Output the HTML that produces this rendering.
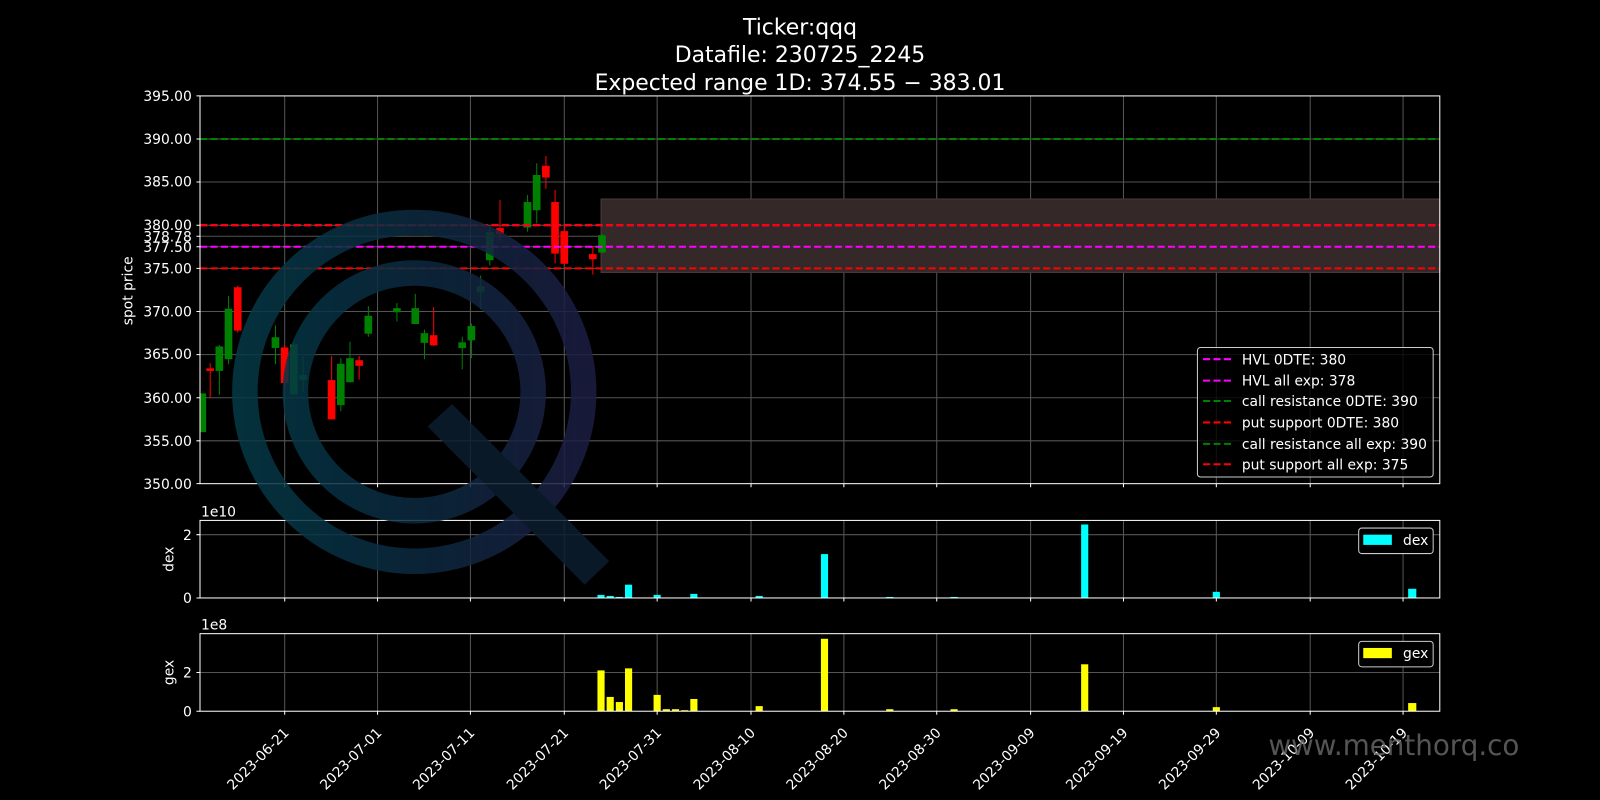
<!DOCTYPE html>
<html><head><meta charset="utf-8"><style>html,body{margin:0;padding:0;background:#000;}svg{display:block}</style></head>
<body>
<svg width="1600" height="800" viewBox="0 0 1568 784" preserveAspectRatio="none" xmlns="http://www.w3.org/2000/svg" font-family="DejaVu Sans, Liberation Sans, sans-serif" fill="#fff">
<defs>
<linearGradient id="wg" x1="228" y1="0" x2="596" y2="0" gradientUnits="userSpaceOnUse">
<stop offset="0" stop-color="#043a47"/><stop offset="0.5" stop-color="#0c2a40"/><stop offset="1" stop-color="#1f1c42"/>
</linearGradient>
<clipPath id="mc"><rect x="196" y="94" width="1215" height="380"/></clipPath>
</defs>
<rect width="1568" height="784" fill="#000"/>
<g font-size="21.5" text-anchor="middle">
<text x="784" y="34">Ticker:qqq</text>
<text x="784" y="61">Datafile: 230725_2245</text>
<text x="784" y="88">Expected range 1D: 374.55 − 383.01</text>
</g>
<g stroke="#555" stroke-width="1">
<path d="M279 94V474M370 94V474M461 94V474M553 94V474M644 94V474M736 94V474M827 94V474M918 94V474M1010 94V474M1101 94V474M1192 94V474M1284 94V474M1375 94V474"/>
<path d="M196 136.2H1411M196 178.4H1411M196 220.7H1411M196 231.5H1411M196 241.8H1411M196 263H1411M196 305.3H1411M196 347.5H1411M196 389.8H1411M196 432H1411"/>
<path d="M279 510V586M370 510V586M461 510V586M553 510V586M644 510V586M736 510V586M827 510V586M918 510V586M1010 510V586M1101 510V586M1192 510V586M1284 510V586M1375 510V586M196 524H1411"/>
<path d="M279 621V697M370 621V697M461 621V697M553 621V697M644 621V697M736 621V697M827 621V697M918 621V697M1010 621V697M1101 621V697M1192 621V697M1284 621V697M1375 621V697M196 659H1411"/>
</g>
<rect x="589" y="195" width="822" height="72" fill="#352829" stroke="#4a3a3c" stroke-width="1"/>
<g clip-path="url(#mc)">
<g stroke-width="1">
<g fill="#008000" stroke="#008000">
<rect x="195" y="386" width="6.5" height="37"/>
<line x1="215" y1="338" x2="215" y2="387"/><rect x="211.7" y="340" width="6.5" height="23"/>
<line x1="224" y1="290" x2="224" y2="357"/><rect x="220.7" y="303" width="6.5" height="48.5"/>
<line x1="270" y1="319" x2="270" y2="357"/><rect x="266.7" y="331" width="6.5" height="9.5"/>
<line x1="288" y1="335" x2="288" y2="388"/><rect x="284.7" y="338" width="6.5" height="48"/>
<line x1="297" y1="349" x2="297" y2="384"/><rect x="293.7" y="368" width="6.5" height="4"/>
<line x1="334" y1="351" x2="334" y2="403"/><rect x="330.7" y="357" width="6.5" height="39.5"/>
<line x1="343" y1="335" x2="343" y2="375"/><rect x="339.7" y="351.5" width="6.5" height="22.5"/>
<line x1="361" y1="300" x2="361" y2="330"/><rect x="357.7" y="310" width="6.5" height="16.5"/>
<line x1="389" y1="297" x2="389" y2="315"/><rect x="385.7" y="302.5" width="6.5" height="3"/>
<line x1="407" y1="288" x2="407" y2="317"/><rect x="403.7" y="302.5" width="6.5" height="14.5"/>
<line x1="416" y1="323" x2="416" y2="352"/><rect x="412.7" y="327" width="6.5" height="8.5"/>
<line x1="453" y1="330" x2="453" y2="362"/><rect x="449.7" y="336" width="6.5" height="4.5"/>
<line x1="462" y1="317" x2="462" y2="351"/><rect x="458.7" y="320" width="6.5" height="13"/>
<line x1="471" y1="270" x2="471" y2="303"/><rect x="467.7" y="281" width="6.5" height="5"/>
<line x1="480" y1="221" x2="480" y2="260"/><rect x="476.7" y="228" width="6.5" height="26.5"/>
<line x1="517" y1="191" x2="517" y2="227"/><rect x="513.7" y="198.5" width="6.5" height="24"/>
<line x1="526" y1="160" x2="526" y2="219"/><rect x="522.7" y="172" width="6.5" height="33.5"/>
<line x1="590" y1="229" x2="590" y2="248"/><rect x="586.7" y="231" width="6.5" height="16"/>
</g>
<g fill="#ff0000" stroke="#ff0000">
<line x1="206" y1="356" x2="206" y2="390"/><rect x="202.7" y="361.5" width="6.5" height="1.5"/>
<line x1="233" y1="280" x2="233" y2="326"/><rect x="229.7" y="282" width="6.5" height="41.5"/>
<line x1="279" y1="338" x2="279" y2="383"/><rect x="275.7" y="341" width="6.5" height="34"/>
<line x1="325" y1="349" x2="325" y2="411"/><rect x="321.7" y="373" width="6.5" height="37.5"/>
<line x1="352" y1="349" x2="352" y2="372"/><rect x="348.7" y="353.5" width="6.5" height="4.5"/>
<line x1="425" y1="301" x2="425" y2="339"/><rect x="421.7" y="329" width="6.5" height="9"/>
<line x1="490" y1="196" x2="490" y2="236"/><rect x="486.7" y="224" width="6.5" height="5"/>
<line x1="535" y1="153" x2="535" y2="185"/><rect x="531.7" y="163" width="6.5" height="10.5"/>
<line x1="544" y1="186" x2="544" y2="258"/><rect x="540.7" y="198.5" width="6.5" height="49.5"/>
<line x1="553" y1="220" x2="553" y2="259"/><rect x="549.7" y="227" width="6.5" height="31"/>
<line x1="581" y1="241" x2="581" y2="269"/><rect x="577.7" y="249.5" width="6.5" height="4"/>
</g>
</g>
</g>
<g stroke-width="2" stroke-dasharray="7,3.2" fill="none">
<line x1="196" y1="136.2" x2="1411" y2="136.2" stroke="#008000"/>
<line x1="196" y1="220.7" x2="1411" y2="220.7" stroke="#ff00ff"/>
<line x1="196" y1="220.7" x2="1411" y2="220.7" stroke="#ff0000"/>
<line x1="196" y1="241.8" x2="1411" y2="241.8" stroke="#ff00ff"/>
<line x1="196" y1="263" x2="1411" y2="263" stroke="#ff0000"/>
</g>
<g fill="#00ffff">
<rect x="585.5" y="583" width="7" height="3"/><rect x="594.5" y="584" width="7" height="2"/><rect x="603.5" y="585" width="7" height="1"/><rect x="612.5" y="573" width="7" height="13"/>
<rect x="640.5" y="583" width="7" height="3"/><rect x="676.5" y="582" width="7" height="4"/><rect x="740.5" y="584" width="7" height="2"/>
<rect x="804.5" y="543" width="7" height="43"/><rect x="868.5" y="585" width="7" height="1"/><rect x="931.5" y="585" width="7" height="1"/>
<rect x="1059.5" y="514" width="7" height="72"/><rect x="1188.5" y="580" width="7" height="6"/><rect x="1380" y="577" width="8" height="9"/>
</g>
<g fill="#ffff00">
<rect x="585.5" y="657" width="7" height="40"/><rect x="594.5" y="683" width="7" height="14"/><rect x="603.5" y="688" width="7" height="9"/><rect x="612.5" y="655" width="7" height="42"/>
<rect x="640.5" y="681" width="7" height="16"/><rect x="649.5" y="695" width="7" height="2"/><rect x="658.5" y="695" width="7" height="2"/><rect x="667.5" y="696" width="7" height="1"/>
<rect x="676.5" y="685" width="7" height="12"/><rect x="740.5" y="692" width="7" height="5"/><rect x="804.5" y="626" width="7" height="71"/>
<rect x="868.5" y="695" width="7" height="2"/><rect x="931.5" y="695" width="7" height="2"/><rect x="1059.5" y="651" width="7" height="46"/>
<rect x="1188.5" y="693" width="7" height="4"/><rect x="1380" y="689" width="8" height="8"/>
</g>
<g stroke="#fff" stroke-width="1" fill="none">
<rect x="196" y="94" width="1215" height="380"/>
<rect x="196" y="510" width="1215" height="76"/>
<rect x="196" y="621" width="1215" height="76"/>
<path d="M192.5 94H196M192.5 136.2H196M192.5 178.4H196M192.5 220.7H196M192.5 231.5H196M192.5 241.8H196M192.5 263H196M192.5 305.3H196M192.5 347.5H196M192.5 389.8H196M192.5 432H196M192.5 474H196"/>
<path d="M192.5 524H196M192.5 586H196M192.5 659H196M192.5 697H196"/>
<path d="M279 474V477.5M370 474V477.5M461 474V477.5M553 474V477.5M644 474V477.5M736 474V477.5M827 474V477.5M918 474V477.5M1010 474V477.5M1101 474V477.5M1192 474V477.5M1284 474V477.5M1375 474V477.5"/>
<path d="M279 586V589.5M370 586V589.5M461 586V589.5M553 586V589.5M644 586V589.5M736 586V589.5M827 586V589.5M918 586V589.5M1010 586V589.5M1101 586V589.5M1192 586V589.5M1284 586V589.5M1375 586V589.5"/>
<path d="M279 697V700.5M370 697V700.5M461 697V700.5M553 697V700.5M644 697V700.5M736 697V700.5M827 697V700.5M918 697V700.5M1010 697V700.5M1101 697V700.5M1192 697V700.5M1284 697V700.5M1375 697V700.5"/>
</g>
<g font-size="13.6" text-anchor="end">
<text x="188" y="99">395.00</text>
<text x="188" y="141">390.00</text>
<text x="188" y="183">385.00</text>
<text x="188" y="225.5">380.00</text>
<text x="188" y="236.5">378.78</text>
<text x="188" y="247">377.50</text>
<text x="188" y="268">375.00</text>
<text x="188" y="310">370.00</text>
<text x="188" y="352">365.00</text>
<text x="188" y="395">360.00</text>
<text x="188" y="437">355.00</text>
<text x="188" y="479">350.00</text>
<text x="188" y="529">2</text>
<text x="188" y="591">0</text>
<text x="188" y="664">2</text>
<text x="188" y="702">0</text>
</g>
<g font-size="13.6">
<text x="197" y="506">1e10</text>
<text x="197" y="617">1e8</text>
<text transform="translate(130,285) rotate(-90)" text-anchor="middle">spot price</text>
<text transform="translate(170,548) rotate(-90)" text-anchor="middle">dex</text>
<text transform="translate(170,659) rotate(-90)" text-anchor="middle">gex</text>
</g>
<g font-size="13.6" text-anchor="end">
<text transform="translate(284,719) rotate(-45)">2023-06-21</text>
<text transform="translate(375,719) rotate(-45)">2023-07-01</text>
<text transform="translate(466,719) rotate(-45)">2023-07-11</text>
<text transform="translate(558,719) rotate(-45)">2023-07-21</text>
<text transform="translate(649,719) rotate(-45)">2023-07-31</text>
<text transform="translate(741,719) rotate(-45)">2023-08-10</text>
<text transform="translate(832,719) rotate(-45)">2023-08-20</text>
<text transform="translate(923,719) rotate(-45)">2023-08-30</text>
<text transform="translate(1015,719) rotate(-45)">2023-09-09</text>
<text transform="translate(1106,719) rotate(-45)">2023-09-19</text>
<text transform="translate(1197,719) rotate(-45)">2023-09-29</text>
<text transform="translate(1289,719) rotate(-45)">2023-10-09</text>
<text transform="translate(1380,719) rotate(-45)">2023-10-19</text>
</g>
<g>
<rect x="1173.5" y="340.5" width="231" height="127" rx="3" fill="#000" fill-opacity="0.8" stroke="#ccc" stroke-width="1"/>
<g stroke-width="2" stroke-dasharray="7,3.2">
<line x1="1179" y1="352" x2="1209" y2="352" stroke="#ff00ff"/>
<line x1="1179" y1="373" x2="1209" y2="373" stroke="#ff00ff"/>
<line x1="1179" y1="393" x2="1209" y2="393" stroke="#008000"/>
<line x1="1179" y1="414" x2="1209" y2="414" stroke="#ff0000"/>
<line x1="1179" y1="435" x2="1209" y2="435" stroke="#008000"/>
<line x1="1179" y1="455" x2="1209" y2="455" stroke="#ff0000"/>
</g>
<g font-size="13.6">
<text x="1217" y="357">HVL 0DTE: 380</text>
<text x="1217" y="378">HVL all exp: 378</text>
<text x="1217" y="398">call resistance 0DTE: 390</text>
<text x="1217" y="419">put support 0DTE: 380</text>
<text x="1217" y="440">call resistance all exp: 390</text>
<text x="1217" y="460">put support all exp: 375</text>
</g>
<rect x="1331.5" y="517.5" width="73" height="25" rx="3" fill="#000" stroke="#ccc"/>
<rect x="1336" y="524" width="28" height="10" fill="#00ffff"/>
<text x="1375" y="534" font-size="13.6">dex</text>
<rect x="1331.5" y="628.5" width="73" height="25" rx="3" fill="#000" stroke="#ccc"/>
<rect x="1336" y="635" width="28" height="10" fill="#ffff00"/>
<text x="1375" y="645" font-size="13.6">gex</text>
</g>
<g opacity="0.85" fill="none">
<circle cx="406" cy="384" r="166" stroke="url(#wg)" stroke-width="25"/>
<circle cx="406" cy="384" r="116.5" stroke="url(#wg)" stroke-width="25"/>
<polygon points="419,418 443,396 597,550 573,573" fill="#0c1e30" stroke="none"/>
</g>
<text x="1243" y="740" font-size="28" fill="#6a6a6a" fill-opacity="0.8" textLength="246" lengthAdjust="spacingAndGlyphs">www.menthorq.co</text>
</svg>
</body></html>
